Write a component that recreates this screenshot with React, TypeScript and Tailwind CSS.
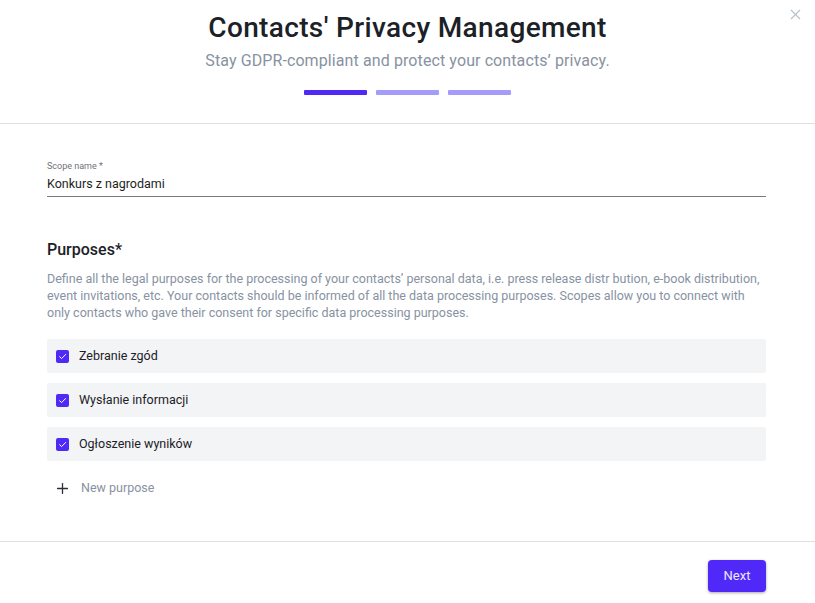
import { Plus, X } from 'lucide-react'

const purposes = ['Zebranie zgód', 'Wysłanie informacji', 'Ogłoszenie wyników']

function Checkbox() {
  return (
    <span className="flex h-[13px] w-[13px] flex-none items-center justify-center rounded-[2px] bg-[#4f2af7]">
      <svg width="9" height="9" viewBox="0 0 10 10" fill="none">
        <path d="M1.8 5.2 4 7.3 8.4 2.8" stroke="#fff" strokeWidth="1.1" strokeLinecap="round" strokeLinejoin="round" />
      </svg>
    </span>
  )
}

export default function App() {
  return (
    <div className="relative flex h-[603px] w-[815px] flex-col overflow-hidden bg-white font-['Roboto',sans-serif] text-[#1c2127]">
      <button type="button" aria-label="Close" className="absolute right-[11px] top-[6px] text-[#b8c0c9]">
        <X size={17} strokeWidth={1.6} />
      </button>

      {/* header */}
      <div className="flex h-[124px] flex-none flex-col items-center border-b border-[#dedfe2] pt-[11px]">
        <h1 className="text-[28px] font-medium leading-[34px] tracking-[0.35px]">Contacts' Privacy Management</h1>
        <p className="mt-[6px] text-[16px] leading-[20px] tracking-[0.1px] text-[#8792a2]">Stay GDPR-compliant and protect your contacts’ privacy.</p>
        <div className="mt-[19px] flex gap-[9px]">
          <span className="h-[5px] w-[63px] rounded-[1px] bg-[#4f2af7]" />
          <span className="h-[5px] w-[63px] rounded-[1px] bg-[#a59cf9]" />
          <span className="h-[5px] w-[63px] rounded-[1px] bg-[#a59cf9]" />
        </div>
      </div>

      {/* body */}
      <div className="flex flex-1 flex-col pl-[47px] pr-[49px] pt-[36px]">
        <label className="text-[9px] leading-[12px] text-[#6f7379]">Scope name *</label>
        <div className="mt-[4px] border-b border-[#7a7a7a] pb-[4px] text-[12.5px] leading-[16px] text-[#1e1e1e]">Konkurs z nagrodami</div>

        <h2 className="mt-[43px] text-[16px] font-medium leading-[20px] text-[#1c2127]">Purposes*</h2>
        <p className="mt-[10px] text-[12.5px] leading-[17px] text-[#8792a2]">
          Define all the legal purposes for the processing of your contacts’ personal data, i.e. press release distr bution, e-book distribution, event invitations, etc. Your contacts should be informed of all the data processing purposes. Scopes allow you to connect with only contacts who gave their consent for specific data processing purposes.
        </p>

        <div className="mt-[18px] flex flex-col gap-[10px]">
          {purposes.map((p) => (
            <div key={p} className="flex h-[34px] items-center gap-[10px] rounded-[2px] bg-[#f3f4f6] px-[9px]">
              <Checkbox />
              <span className="text-[12.5px] leading-[16px] text-[#1c2127]">{p}</span>
            </div>
          ))}
        </div>

        <button type="button" className="mt-[18px] flex items-center gap-[10px] self-start pl-[7px] text-[12.5px] text-[#8792a2]">
          <Plus size={17} strokeWidth={1.8} className="text-[#2a2f35]" />
          New purpose
        </button>
      </div>

      {/* footer */}
      <div className="flex h-[62px] flex-none items-start justify-end border-t border-[#dedfe2] px-[49px] pt-[18px]">
        <button type="button" className="h-[32px] w-[58px] rounded-[4px] bg-[#5028f8] text-[13px] text-white/90 shadow-[0_1px_3px_rgba(0,0,0,0.35)]">
          Next
        </button>
      </div>
    </div>
  )
}
